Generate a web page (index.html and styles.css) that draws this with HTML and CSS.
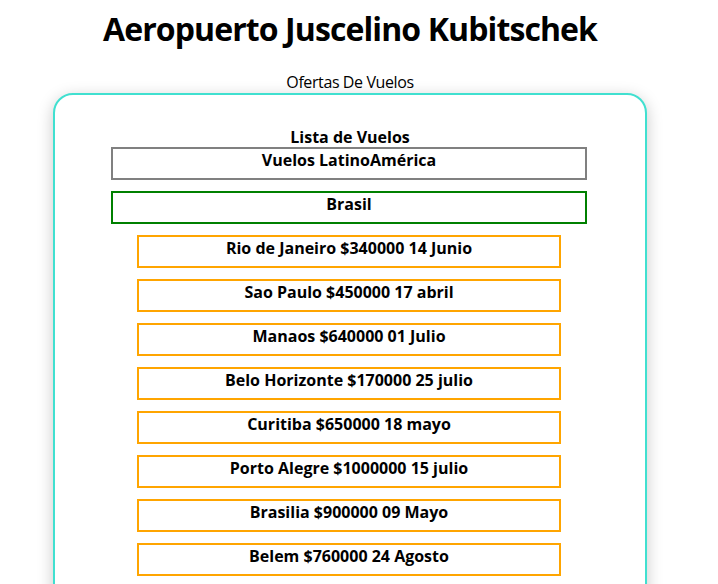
FILE: index.html
```html
<!DOCTYPE html>
<html lang="es">
<head>
<meta charset="utf-8">
<title>Aeropuerto Juscelino Kubitschek</title>
<link rel="stylesheet" href="styles.css">
</head>
<body>
<div class="page">
  <h1 class="title">Aeropuerto Juscelino Kubitschek</h1>
  <p class="subtitle">Ofertas De Vuelos</p>
  <div class="card">
    <h4 class="list-title">Lista de Vuelos</h4>
    <div class="box region">Vuelos LatinoAmérica</div>
    <div class="box country">Brasil</div>
    <ul class="flights">
      <li class="box flight">Rio de Janeiro $340000 14 Junio</li>
      <li class="box flight">Sao Paulo $450000 17 abril</li>
      <li class="box flight">Manaos $640000 01 Julio</li>
      <li class="box flight">Belo Horizonte $170000 25 julio</li>
      <li class="box flight">Curitiba $650000 18 mayo</li>
      <li class="box flight">Porto Alegre $1000000 15 julio</li>
      <li class="box flight">Brasilia $900000 09 Mayo</li>
      <li class="box flight">Belem $760000 24 Agosto</li>
      <li class="box flight">Fortaleza $550000 12 Marzo</li>
      <li class="box flight">Recife $480000 30 Junio</li>
    </ul>
  </div>
</div>
</body>
</html>
```
FILE: styles.css
```css
body {
  margin: 8px;
  font-family: "Open Sans", "Noto Sans", sans-serif;
  color: #000;
  background: #fff;
}
.page {
  width: 684px;
}
.title {
  margin: 0 0 22px;
  font-size: 32px;
  line-height: 42px;
  font-weight: 700;
  letter-spacing: -0.9px;
  text-align: center;
}
.subtitle {
  margin: 0;
  font-size: 16px;
  line-height: 21px;
  letter-spacing: -0.4px;
  text-align: center;
}
.card {
  box-sizing: border-box;
  width: 594px;
  margin-left: 45px;
  border: 2px solid #40e0d0;
  border-radius: 20px;
  box-shadow: 0 4px 16px rgba(0, 0, 0, 0.22);
  padding: 32px 0 40px;
  background: #fff;
}
.list-title {
  margin: 0;
  font-size: 16px;
  line-height: 20px;
  font-weight: 700;
  text-align: center;
}
.box {
  box-sizing: border-box;
  font-size: 16px;
  line-height: 21px;
  font-weight: 700;
  text-align: center;
  padding: 1px 0 7px;
  border: 2px solid;
}
.region {
  width: 476px;
  margin-left: 56px;
  border-color: #808080;
}
.country {
  width: 476px;
  margin: 11px 0 0 56px;
  border-color: #008000;
}
.flights {
  list-style: none;
  margin: 11px 0 0;
  padding: 0;
  display: flex;
  flex-direction: column;
  gap: 11px;
}
.flight {
  width: 424px;
  margin-left: 82px;
  border-color: #ffa500;
}
```
